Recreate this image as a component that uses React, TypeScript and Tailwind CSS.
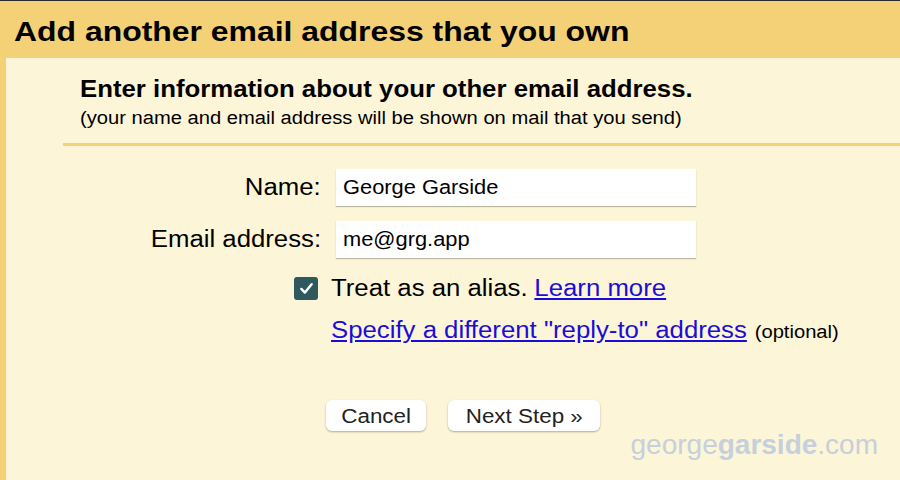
import React from "react";

export default function App() {
  const f = { fontFamily: '"Liberation Sans", Arial, sans-serif' };
  return (
    <div className="w-[900px] h-[480px] overflow-hidden bg-[#f4d077] flex flex-col border-t border-[#2a2a2a]" style={f}>
      <div className="h-[57px] shrink-0 flex items-center pl-[14px]">
        <h1 className="inline-block origin-left scale-x-[1.12] text-[28.5px] font-bold text-black leading-none mt-[4px] whitespace-nowrap">Add another email address that you own</h1>
      </div>
      <div className="flex-1 ml-[6px] bg-[#fdf5d8] flex flex-col">
        <div className="pl-[74px] pt-[18px]">
          <div className="origin-left scale-x-[1.12] text-[23px] font-bold text-black leading-[27px] whitespace-nowrap">Enter information about your other email address.</div>
          <div className="origin-left scale-x-[1.12] text-[18px] text-black leading-[22px] mt-[4px] whitespace-nowrap">(your name and email address will be shown on mail that you send)</div>
        </div>
        <div className="ml-[57px] h-[3px] bg-[#f4d077] mt-[14px]" />
        <div className="flex flex-col mt-[23px]">
          <div className="flex items-center h-[37px]">
            <div className="w-[315px] text-right">
              <span className="inline-block origin-right scale-x-[1.12] text-[23px] text-black">Name:</span>
            </div>
            <div className="ml-[15px] w-[360px] h-[37px] bg-white shadow-[0_1px_1px_rgba(0,0,0,0.25)] flex items-center pl-[7px]">
              <span className="inline-block origin-left scale-x-[1.12] text-[19.5px] text-black">George Garside</span>
            </div>
          </div>
          <div className="flex items-center h-[37px] mt-[15px]">
            <div className="w-[315px] text-right">
              <span className="inline-block origin-right scale-x-[1.12] text-[23px] text-black">Email address:</span>
            </div>
            <div className="ml-[15px] w-[360px] h-[37px] bg-white shadow-[0_1px_1px_rgba(0,0,0,0.25)] flex items-center pl-[7px]">
              <span className="inline-block origin-left scale-x-[1.12] text-[19.5px] text-black">me@grg.app</span>
            </div>
          </div>
          <div className="flex items-center mt-[16px] pl-[288px]">
            <div className="w-[24px] h-[23px] rounded-[3px] bg-[#2e5a5d] flex items-center justify-center">
              <svg width="15" height="15" viewBox="0 0 16 16"><path d="M2.5 8.5 L6.3 12.3 L13.5 3.5" fill="none" stroke="white" strokeWidth="2.6" strokeLinecap="round" strokeLinejoin="round" /></svg>
            </div>
            <div className="ml-[13px] origin-left scale-x-[1.12] text-[23px] leading-[28px] whitespace-nowrap">
              <span className="text-black">Treat as an alias.</span>
              <a className="ml-[6px] text-[#1a0dd9] underline">Learn more</a>
            </div>
          </div>
          <div className="mt-[14px] pl-[325px]">
            <div className="flex items-baseline origin-left scale-x-[1.12] whitespace-nowrap">
              <a className="text-[23px] leading-[28px] text-[#1a0dd9] underline">Specify a different "reply-to" address</a>
              <span className="ml-[7px] text-[18px] text-black">(optional)</span>
            </div>
          </div>
          <div className="flex mt-[54px] pl-[320px] gap-[22px]">
            <button className="w-[100px] h-[31px] bg-white rounded-[6px] shadow-[0_1px_2px_rgba(0,0,0,0.3)] text-[#222]">
              <span className="inline-block scale-x-[1.12] text-[20px]">Cancel</span>
            </button>
            <button className="w-[152px] h-[31px] bg-white rounded-[6px] shadow-[0_1px_2px_rgba(0,0,0,0.3)] text-[#222]">
              <span className="inline-block scale-x-[1.12] text-[20px]">Next Step »</span>
            </button>
          </div>
          <div className="self-end mr-[22px] mt-[0px] text-[28px] text-[#c5d0dc] leading-none">
            george<span className="font-bold">garside</span>.com
          </div>
        </div>
      </div>
    </div>
  );
}
